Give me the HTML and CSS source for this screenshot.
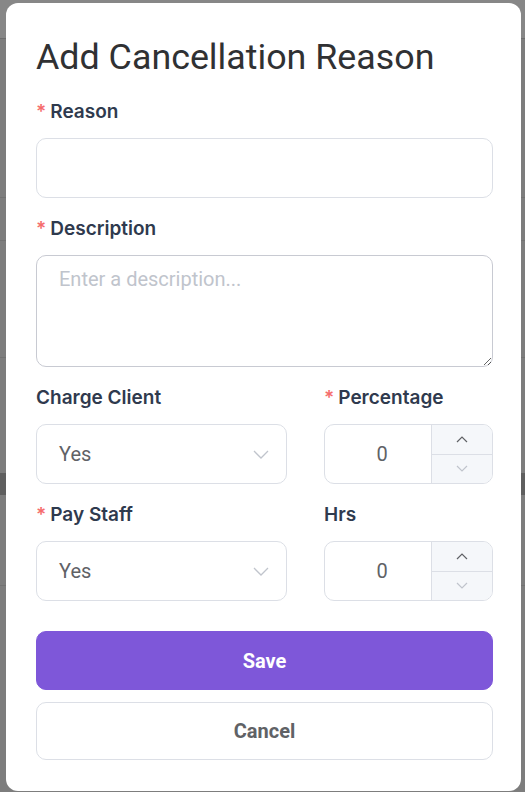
FILE: index.html
```html
<!DOCTYPE html>
<html lang="en">
<head>
<meta charset="utf-8">
<title>Add Cancellation Reason</title>
<link rel="stylesheet" href="styles.css">
</head>
<body>
<div class="backdrop">
  <div class="modal" role="dialog" aria-labelledby="dlg-title">
    <h1 class="title" id="dlg-title">Add Cancellation Reason</h1>
    <form class="form">
      <div class="field">
        <label class="label"><span class="req">*</span>Reason</label>
        <div class="control text-input"></div>
      </div>
      <div class="field">
        <label class="label"><span class="req">*</span>Description</label>
        <textarea class="textarea" placeholder="Enter a description..."></textarea>
      </div>
      <div class="row">
        <div class="field">
          <label class="label">Charge Client</label>
          <div class="control select">
            <span class="value">Yes</span>
            <svg class="chev" width="16" height="9" viewBox="0 0 16 9"><path d="M1 1l7 7 7-7" fill="none" stroke="#c0c4cc" stroke-width="1.3"/></svg>
          </div>
        </div>
        <div class="field">
          <label class="label"><span class="req">*</span>Percentage</label>
          <div class="control number">
            <span class="num">0</span>
            <div class="spin">
              <span class="spin-btn"><svg width="12" height="7" viewBox="0 0 12 7"><path d="M1 6l5-5 5 5" fill="none" stroke="#606266" stroke-width="1.2"/></svg></span>
              <span class="spin-btn"><svg width="12" height="7" viewBox="0 0 12 7"><path d="M1 1l5 5 5-5" fill="none" stroke="#c0c4cc" stroke-width="1.2"/></svg></span>
            </div>
          </div>
        </div>
      </div>
      <div class="row">
        <div class="field">
          <label class="label"><span class="req">*</span>Pay Staff</label>
          <div class="control select">
            <span class="value">Yes</span>
            <svg class="chev" width="16" height="9" viewBox="0 0 16 9"><path d="M1 1l7 7 7-7" fill="none" stroke="#c0c4cc" stroke-width="1.3"/></svg>
          </div>
        </div>
        <div class="field">
          <label class="label">Hrs</label>
          <div class="control number">
            <span class="num">0</span>
            <div class="spin">
              <span class="spin-btn"><svg width="12" height="7" viewBox="0 0 12 7"><path d="M1 6l5-5 5 5" fill="none" stroke="#606266" stroke-width="1.2"/></svg></span>
              <span class="spin-btn"><svg width="12" height="7" viewBox="0 0 12 7"><path d="M1 1l5 5 5-5" fill="none" stroke="#c0c4cc" stroke-width="1.2"/></svg></span>
            </div>
          </div>
        </div>
      </div>
      <div class="actions">
        <button type="button" class="btn btn-primary">Save</button>
        <button type="button" class="btn btn-default">Cancel</button>
      </div>
    </form>
  </div>
</div>
</body>
</html>
```

FILE: styles.css
```css
* { box-sizing: border-box; }

html, body {
  margin: 0;
  height: 100%;
}

body {
  font-family: Roboto, "Liberation Sans", Arial, sans-serif;
  background:
    linear-gradient(to bottom,
      #878787 0, #878787 38px,
      #6e6e6e 38px, #6e6e6e 39px,
      #7d7d7d 39px, #7d7d7d 197px,
      #727272 197px, #727272 198px,
      #7d7d7d 198px, #7d7d7d 240px,
      #727272 240px, #727272 241px,
      #7d7d7d 241px, #7d7d7d 357px,
      #727272 357px, #727272 358px,
      #7d7d7d 358px, #7d7d7d 473px,
      #5f5f5f 473px, #5f5f5f 495px,
      #7d7d7d 495px, #7d7d7d 585px,
      #727272 585px, #727272 586px,
      #7d7d7d 586px);
}

.backdrop {
  padding: 3px 4px 1px 6px;
}

.modal {
  width: 515px;
  background: #fff;
  border-radius: 12px;
  padding: 36px 28px 31px 30px;
}

.title {
  margin: 0 0 24px;
  font-size: 35.8px;
  line-height: 36px;
  font-weight: 400;
  color: #303133;
}

.form {
  display: flex;
  flex-direction: column;
  gap: 18px;
}

.field {
  display: flex;
  flex-direction: column;
  gap: 15px;
  min-width: 0;
}

.label {
  font-family: Inter, Roboto, "Liberation Sans", Arial, sans-serif;
  font-size: 19px;
  line-height: 24px;
  font-weight: 600;
  color: #2f3a4e;
  padding-top: 1px;
  margin-bottom: -1px;
}

.req {
  color: #f56c6c;
  margin-right: 4px;
}

.control {
  height: 60px;
  border: 1px solid #dcdfe6;
  border-radius: 10px;
  background: #fff;
}

.textarea {
  display: block;
  width: 100%;
  height: 112px;
  border: 1px solid #c8cad2;
  border-radius: 10px;
  padding: 8px 22px;
  font-family: Roboto, "Liberation Sans", Arial, sans-serif;
  font-size: 20px;
  line-height: 30px;
  color: #606266;
  resize: vertical;
  outline: none;
}

.textarea::placeholder {
  color: #c0c4cc;
}

.row {
  display: grid;
  grid-template-columns: 251px 169px;
  column-gap: 37px;
}

.select {
  display: flex;
  align-items: center;
  justify-content: space-between;
  padding: 0 17px 0 22px;
}

.value {
  font-size: 20px;
  color: #606266;
}

.number {
  display: flex;
  overflow: hidden;
}

.num {
  flex: 1;
  display: flex;
  align-items: center;
  justify-content: center;
  padding-left: 8px;
  font-size: 20px;
  color: #606266;
}

.spin {
  width: 61px;
  display: flex;
  flex-direction: column;
  border-left: 1px solid #dcdfe6;
  background: #f5f7fa;
}

.spin-btn {
  flex: 1;
  display: flex;
  align-items: center;
  justify-content: center;
}

.spin-btn + .spin-btn {
  border-top: 1px solid #dcdfe6;
}

.actions {
  display: flex;
  flex-direction: column;
  gap: 12px;
  margin-top: 12px;
}

.btn {
  height: 59px;
  width: 100%;
  border-radius: 10px;
  font-family: Roboto, "Liberation Sans", Arial, sans-serif;
  font-size: 20px;
  font-weight: 700;
  cursor: pointer;
}

.btn-primary {
  background: #7e57d9;
  border: 1px solid #7e57d9;
  color: #fff;
}

.btn-default {
  height: 58px;
  background: #fff;
  border: 1px solid #dcdfe6;
  color: #606266;
}
```
